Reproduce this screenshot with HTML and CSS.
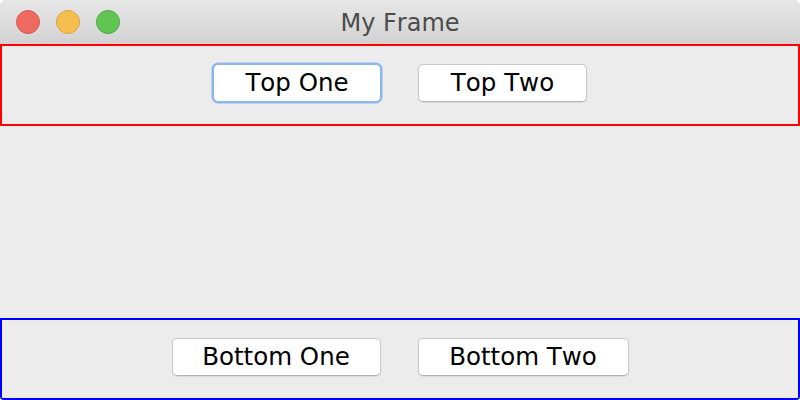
FILE: index.html
```html
<!DOCTYPE html>
<html>
<head>
<meta charset="utf-8">
<link rel="stylesheet" href="styles.css">
</head>
<body>
<div class="window">
  <div class="titlebar">
    <div class="lights">
      <span class="light red"></span>
      <span class="light yellow"></span>
      <span class="light green"></span>
    </div>
    <div class="title">My Frame</div>
  </div>
  <div class="panel top">
    <button class="btn focused w-top-one">Top One</button>
    <button class="btn w-top-two">Top Two</button>
  </div>
  <div class="center"></div>
  <div class="panel bottom">
    <button class="btn w-bottom-one">Bottom One</button>
    <button class="btn w-bottom-two">Bottom Two</button>
  </div>
</div>
</body>
</html>
```
FILE: styles.css
```css
html, body {
  margin: 0;
  padding: 0;
  background: #ffffff;
}
.window {
  width: 800px;
  height: 400px;
  display: flex;
  flex-direction: column;
  background: #ececec;
  border-radius: 6px 6px 4px 4px;
  overflow: hidden;
  font-family: "DejaVu Sans", sans-serif;
}
.titlebar {
  position: relative;
  height: 44px;
  flex: none;
  background: linear-gradient(#e8e7e8, #d2d2d2);
  display: flex;
  align-items: center;
  justify-content: center;
}
.lights {
  position: absolute;
  left: 16px;
  top: 10px;
  display: flex;
  gap: 16px;
}
.light {
  width: 22px;
  height: 22px;
  border-radius: 50%;
  border: 1px solid;
}
.red { background: #ee6a5f; border-color: #d75a4f; }
.yellow { background: #f5bf4f; border-color: #d9a43f; }
.green { background: #61c554; border-color: #52a842; }
.title {
  font-size: 24px;
  font-kerning: none;
  color: #4c4c4c;
  padding-top: 1px;
}
.panel {
  flex: none;
  display: flex;
  justify-content: center;
  align-items: flex-start;
  gap: 37px;
  padding-top: 18px;
  box-sizing: border-box;
  height: 82px;
}
.panel.top { border: 2px solid #ff0000; }
.panel.bottom { border: 2px solid #0000ff; }
.center { flex: 1; }
.btn {
  height: 38px;
  padding: 0;
  box-sizing: border-box;
  background: #ffffff;
  border: 1px solid #c8c8c8;
  border-bottom-color: #b4b4b4;
  border-radius: 5px;
  box-shadow: 0 1px 1px rgba(0,0,0,0.08);
  font-family: "DejaVu Sans", sans-serif;
  font-size: 24.5px;
  font-kerning: none;
  color: #000000;
  line-height: 34px;
  text-align: center;
}
.w-top-one { width: 168px; }
.w-top-two { width: 169px; }
.w-bottom-one { width: 209px; }
.w-bottom-two { width: 211px; }
.btn.focused {
  border-color: #8ab6ec;
  box-shadow: 0 0 0 1.5px #8ab8ee;
}
```
